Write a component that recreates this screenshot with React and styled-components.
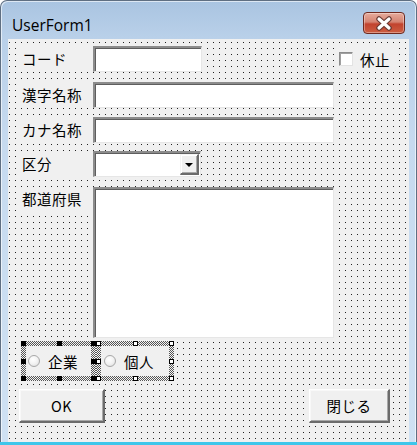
import styled, { createGlobalStyle } from 'styled-components';

const GlobalStyle = createGlobalStyle`
  html, body {
    margin: 0;
    padding: 0;
    background: #ffffff;
  }
  body {
    font-family: "Noto Sans CJK JP", "Noto Sans", sans-serif;
    color: #000;
  }
`;

const Window = styled.div`
  width: 417px;
  height: 445px;
  box-sizing: border-box;
  display: flex;
  flex-direction: column;
  padding: 0 7px;
  background: linear-gradient(to bottom, #a9c4e1 0, #b9d0e9 36px, #c6daef 140px, #cfe1f3 100%);
  border: 1px solid #5f6f82;
  border-bottom: none;
  border-radius: 7px 7px 0 0;
  box-shadow: inset 1px 1px 0 rgba(255, 255, 255, 0.6), inset -1px 0 0 rgba(255, 255, 255, 0.6);
  position: relative;
`;

const TitleBar = styled.div`
  height: 38px;
  flex: none;
  display: flex;
  align-items: flex-start;
  justify-content: space-between;
`;

const Title = styled.div`
  font-family: "Open Sans", "Noto Sans", sans-serif;
  font-size: 15.5px;
  padding: 14px 0 0 4px;
  line-height: 20px;
  color: #000;
`;

const CloseButton = styled.div`
  flex: none;
  width: 42px;
  height: 22px;
  margin: 11px 4px 0 0;
  box-sizing: border-box;
  border: 1px solid #6e2a20;
  border-radius: 4px;
  background: linear-gradient(to bottom, #e6ab9c 0, #d58472 45%, #c2432e 55%, #cc5e42 100%);
  box-shadow: inset 0 0 0 1px rgba(255, 255, 255, 0.35);
  display: flex;
  align-items: center;
  justify-content: center;
`;

const Canvas = styled.div`
  flex: 1;
  display: flex;
  flex-direction: column;
  padding: 7px 0 0 12px;
  background-color: #f0f0f0;
  background-image: conic-gradient(at 1px 1px, transparent 75%, #222 0);
  background-size: 6px 6px;
  background-position: 1px 3px;
`;

const Row = styled.div`
  display: flex;
  align-items: ${(p) => (p.$top ? 'flex-start' : 'center')};
  margin-top: ${(p) => p.$gap || 0}px;
`;

const Label = styled.div`
  width: 68px;
  height: 24px;
  margin-right: 5px;
  padding-left: 2px;
  box-sizing: border-box;
  background: #f0f0f0;
  font-size: 14.5px;
  letter-spacing: 0.5px;
  line-height: 24px;
  white-space: nowrap;
`;

const TextBox = styled.div`
  flex: none;
  width: ${(p) => p.$w}px;
  height: ${(p) => p.$h || 26}px;
  box-sizing: border-box;
  background: #ffffff;
  border-style: solid;
  border-width: 2px 1px 1px 2px;
  border-color: #8c8c8c #e6e6e6 #e6e6e6 #8c8c8c;
  box-shadow: inset 1px 1px 0 #5e5e5e;
  display: flex;
  justify-content: flex-end;
  padding: 1px 1px 1px 2px;
`;

const DropButton = styled.div`
  width: 19px;
  height: 100%;
  box-sizing: border-box;
  background: #f0f0f0;
  border-style: solid;
  border-width: 1px 2px 2px 1px;
  border-color: #f4f4f4 #6b6b6b #6b6b6b #f4f4f4;
  box-shadow: inset 1px 1px 0 #ffffff, inset -1px -1px 0 #a8a8a8;
  display: flex;
  align-items: center;
  justify-content: center;
  &::after {
    content: '';
    border-left: 4px solid transparent;
    border-right: 4px solid transparent;
    border-top: 4px solid #000;
    margin-top: 1px;
  }
`;

const CheckField = styled.div`
  margin-left: 132px;
  height: 24px;
  width: 60px;
  display: flex;
  align-items: center;
  gap: 7px;
  padding-left: 5px;
  background: #f0f0f0;
  font-size: 14.5px;
  letter-spacing: 0.5px;
`;

const CheckBox = styled.div`
  width: 14px;
  height: 14px;
  box-sizing: border-box;
  background: #ffffff;
  border-style: solid;
  border-width: 1px;
  border-color: #8c8c8c #e3e3e3 #e3e3e3 #8c8c8c;
  box-shadow: inset 1px 1px 0 #a0a0a0;
`;

const OptionGroup = styled.div`
  display: flex;
  margin-left: 1px;
`;

const Selected = styled.div`
  position: relative;
  width: ${(p) => p.$w}px;
  height: 40px;
  box-sizing: border-box;
  padding: 5px;
  background: repeating-conic-gradient(#555 0 25%, #f4f4f4 0 50%) 0 0 / 2px 2px;
`;

const Option = styled.div`
  height: 100%;
  background: #f0f0f0;
  display: flex;
  align-items: center;
  gap: 8px;
  padding-left: ${(p) => p.$pad}px;
  font-size: 14.5px;
  letter-spacing: 0.5px;
`;

const Radio = styled.span`
  width: 12px;
  height: 12px;
  box-sizing: border-box;
  border-radius: 50%;
  border: 1px solid #a8a8a8;
  background: radial-gradient(circle at 40% 35%, #ffffff 0, #f2f2f2 50%, #d8d8d8 100%);
`;

const Handle = styled.span`
  position: absolute;
  width: 5px;
  height: 5px;
  box-sizing: border-box;
  background: ${(p) => (p.$primary ? '#000' : '#fff')};
  border: 1px solid #000;
  left: ${(p) => p.$x};
  top: ${(p) => p.$y};
`;

const ButtonRow = styled.div`
  display: flex;
  justify-content: space-between;
  margin-top: 8px;
  padding-right: 19px;
  margin-left: -1px;
`;

const PushButton = styled.div`
  width: ${(p) => p.$w}px;
  height: 34px;
  box-sizing: border-box;
  background: #f0f0f0;
  border-style: solid;
  border-width: 1px 2px 2px 1px;
  border-color: #ffffff #6b6b6b #6b6b6b #ffffff;
  box-shadow: inset 1px 1px 0 #f8f8f8, inset -1px -1px 0 #a8a8a8;
  display: flex;
  align-items: center;
  justify-content: center;
  font-size: 14.5px;
  letter-spacing: 0.5px;
`;

const BottomLine = styled.div`
  position: absolute;
  left: -1px;
  right: -1px;
  bottom: 0;
  height: 3px;
  background: #3ec6ea;
`;

const spots = ['0px', 'calc(50% - 2px)', 'calc(100% - 5px)'];

function Handles({ primary }) {
  const out = [];
  spots.forEach((y, yi) =>
    spots.forEach((x, xi) => {
      if (xi === 1 && yi === 1) return;
      out.push(<Handle key={`${xi}-${yi}`} $x={x} $y={y} $primary={primary} />);
    })
  );
  return out;
}

function CloseGlyph() {
  return (
    <svg width="20" height="15" viewBox="0 0 20 15">
      <path d="M5 3 L15 12 M15 3 L5 12" stroke="#6a3a33" strokeWidth="5.5" strokeLinecap="round" />
      <path d="M5 3 L15 12 M15 3 L5 12" stroke="#ffffff" strokeWidth="3.2" strokeLinecap="round" />
    </svg>
  );
}

export default function App() {
  return (
    <>
      <GlobalStyle />
      <Window>
        <TitleBar>
          <Title>UserForm1</Title>
          <CloseButton>
            <CloseGlyph />
          </CloseButton>
        </TitleBar>
        <Canvas>
          <Row>
            <Label>コード</Label>
            <TextBox $w={109} />
            <CheckField>
              <CheckBox />
              休止
            </CheckField>
          </Row>
          <Row $gap={10}>
            <Label>漢字名称</Label>
            <TextBox $w={241} />
          </Row>
          <Row $gap={9}>
            <Label>カナ名称</Label>
            <TextBox $w={241} />
          </Row>
          <Row $gap={8}>
            <Label>区分</Label>
            <TextBox $w={108}>
              <DropButton />
            </TextBox>
          </Row>
          <Row $gap={10} $top>
            <Label>都道府県</Label>
            <TextBox $w={241} $h={151} />
          </Row>
          <Row $gap={3}>
            <OptionGroup>
              <Selected $w={75}>
                <Option $pad={2}>
                  <Radio />
                  企業
                </Option>
                <Handles primary />
              </Selected>
              <Selected $w={78}>
                <Option $pad={3}>
                  <Radio />
                  個人
                </Option>
                <Handles />
              </Selected>
            </OptionGroup>
          </Row>
          <ButtonRow>
            <PushButton $w={86}>OK</PushButton>
            <PushButton $w={81}>閉じる</PushButton>
          </ButtonRow>
        </Canvas>
        <BottomLine />
      </Window>
    </>
  );
}
